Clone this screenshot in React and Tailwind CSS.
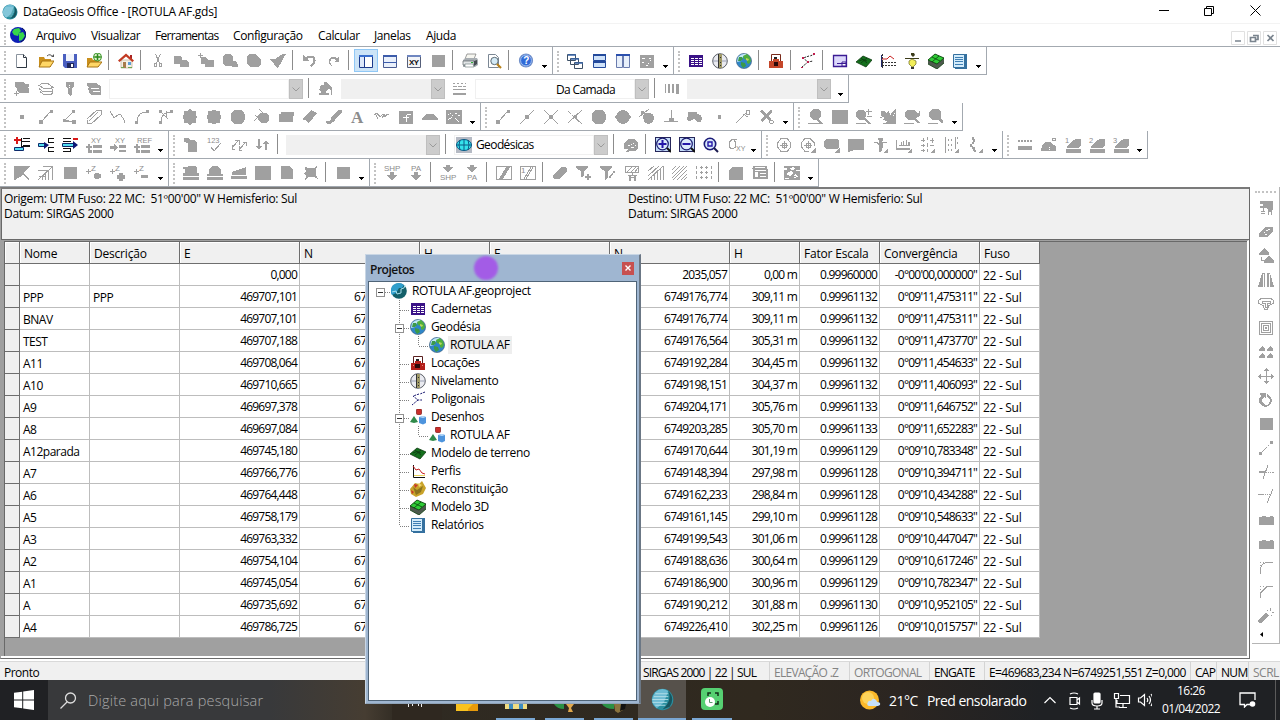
import { Fragment } from "react";

// Disabled toolbar glyphs on a 16x16 grid: f = filled path, s = stroked path, t = [x, y, size, text]
const glyphs = {
  cut: { s: "M5.5 1l4 9M10.5 1l-4 9M4.5 10.5h2v3h-2zM9.5 10.5h2v3h-2z" },
  copy: { f: "M0 3h6l2 2v2h4l3 3v4H6v-3H0z" },
  copyPlus: { f: "M3 4h5l2 3h6v7H7v-3H3zM0 2h5v1H0zM2 0h1v5H2z" },
  paste: { f: "M1 3l2-2h5l3 2v5h3l2 4v2h-6v-1H3l-2-2z" },
  pasteSpecial: { f: "M1 3l2-2h6l3 2 3 4v4l-3 3H5l-4-3z" },
  brush: { f: "M0 6h5l3-2 5-3h3l-3 5-2 4-3 5H7l-3-4z" },
  undo: { f: "M1 2v6h6L5 6q5-3 6 0t-3 7l2 1q5-5 3-9T3 4z" },
  redo: { f: "M13 4v5H8l2-2Q7 4 5 7t2 6H5Q1 8 4 5t7 0z" },
  square: { f: "M2 2h13v12H2z" },
  windowGray: { f: "M1 2h14v13H1z", w: "M3 5h3v1H3zM10 5h2v1h-2zM11 7h1v1h-1zM3 9h2v1H3zM9 10h1v1H9zM7 12h2v1H7z" },
  layersDown: { f: "M1 1h8l2 2h4v3l-2 1h2v5H6l-4-3 2-1-3-2zM0 12h5v1H0zM2 10h1v5H2z" },
  layers: { s: "M1 4.5l3-2h6l5 4-3 1H6zM1 7.5l4 3h9l1-2M2 10.500l4 3h7l2-2" },
  torch: { f: "M4 1h8v4l-2 3v5l-2 2-2-2V8L4 5z", w: "M7 4h1v1H7zM7 6h1v1H7z" },
  layers2: { f: "M1 2h9l5 3v9H6l-4-3 2-1-3-2 2-1-2-2z", w: "M5 7h8v1H5zM7 10h7v1H7z" },
  bucket: { f: "M3 4h3V1h3l5 6v7h-1V9l-3-1-2 2v2h3v2H1v-2l3-1-3-2z" },
  lineStyles: { f: "M1 2h2v1H1zM5 2h2v1H5zM9 2h2v1H9zM13 2h1v1h-1zM1 5h4v1H1zM6 5h4v1H6zM11 5h3v1h-3zM1 8h13v1H1zM1 12h13v2H1z" },
  lineWeights: { f: "M1 3h1v9H1zM4 3h2v9H4zM8 3h2v9H8zM12 3h3v10h-3z" },
  dot: { f: "M6 6h4v4H6z" },
  line: { f: "M12 1h3v3h-3zM1 11h4v4H1z", s: "M4 12l8-9" },
  angle: { f: "M10 1h3v3h-3zM1 10h3v3H1zM10 11h4v4h-4z", s: "M11 3L3 11l8 2M4 12.500h6" },
  parallel: { s: "M1 10L11 1M5 15L15 6M1 10.500v4h4M11 1.500h4v4M3 12l9-9" },
  polyline: { s: "M0 2l4 7 5-4 2 1 3 5 1 3" },
  arc: { f: "M12 1h3v3h-3zM1 12h3v3H1z", s: "M3 13Q3 3 13 3" },
  arcs: { f: "M1 1h3v3H1zM12 1h3v3h-3zM1 12h3v3H1z", s: "M3 13Q3 3 13 3M2 2l8 8M8 1.500v6" },
  octagon: { f: "M8 0l3 2h3v3l1 3-1 3v3h-3l-3 2-3-2H2v-3L1 8l1-3V2h3z" },
  octagon2: { f: "M6 1h4v1h4v4h1v4h-1v4h-4v1H6v-1H2v-4H1V6h1V2h4z" },
  circle: { f: "M5 1h6l3 2 1 3v4l-1 3-3 2H5l-3-2-1-3V6l1-3z" },
  tangent: { f: "M7 4h5l3 3v4l-3 3H7l-3-3V8l-4 4L6 4z", s: "M5 0l6 6M1 6l6 5" },
  rect: { f: "M3 3h13v3l-1 2v5H1V5h2z" },
  diamond: { f: "M1 9l8-8 6 3-7 9-2 1-2-3H1z" },
  slope: { f: "M0 12h4l2-5 7-6h3v3l-7 6v2l-5 3H1z" },
  letterA: { t: [1, 14, 17, "A"], serif: true },
  wave: { s: "M0 6l3-2 3 4 3-3 2 3 2-3 2 1M2 6l2 4M8 9l3-4" },
  imgF: { f: "M1 2h14v13H1z", w: "M9 5h4v1H9zM8 6h1v7H8zM5 8h6v1H5z" },
  dome: { f: "M0 10l4-5h7l5 5v1H0z" },
  imgHatch: { f: "M0 1h16v14H0z", w: "M2 5h1v1H2zM4 4h1v1H4zM6 6h1v1H6zM9 4h2v1H9zM12 6h2v1h-2zM2 10l4-2v1l-4 2zM9 8l4 5h-1L8 9z" },
  midpoint: { f: "M6 6h4v4H6z", s: "M1 15L15 1" },
  cross: { f: "M6 6h4v4H6z", s: "M1 1l14 14M1 15L15 1" },
  cross2: { f: "M7 6h3v3H7z", s: "M1 2l3 3M5 6l10 9M1 14L15 1" },
  roundDiamond: { f: "M8 1l4 1 2 3 2 3-2 3-2 3-4 1-4-1-2-3-2-3 2-3 2-3z" },
  tangentDot: { f: "M5 4h4l5 1 1 4-1 4-4 2-4-1-2-5zM2 2h3v3H2z", s: "M0 8L10 0" },
  perp: { f: "M6 9h5v4H6z", s: "M8.500 1v9M1 12.500h14" },
  blobs: { f: "M1 3h9v2l4 1 1 3-1 4h-4l-3-3-4 2H1l-1-2 1-3z" },
  dotSmall: { f: "M7 6h3v4H7z" },
  lineCircle: { s: "M1 14L12 3M8 5l5 3M11.500 1.500h3v4h-3z" },
  crossX: { f: "M1 2l2-1 4 4 4-4h2v2L9 7l3 3-1 2-4-3-4 4-2-2 4-4zM11 11h3v1h-3zM11 14h3v1h-3zM10 12h1v2h-1zM14 12h1v2h-1z" },
  zoomBlob: { f: "M5 0h5l3 3v5l-3 2 4 3v1h1v1H0v-1h11l-3-3H5L2 8V3z" },
  zoomPM: { f: "M2 1h5l3 3v3l-1 2 6 5v1h-3l-4-4H4L0 8V3zM12 0h1v2h3v1h-3v3h-1V3h-2V2h2zM11 7h5v1h-5zM0 14h10v1H0z" },
  pan: { f: "M1 2h3l2 2 3-2 1 3 6-5v15H3v-1l5-1-6-3 3-1-4-2zM0 8h2v1H0z", w: "M12 2h1v1h-1zM14 4h1v1h-1zM10 5h1v1h-1zM13 6h1v1h-1z" },
  zoomBack: { f: "M3 1h7l3 3h2l1-3v6l-3 1-1 2 4 4h-3l-3-3H4L1 8V4zM0 14h10v1H0z" },
  zoomPlain: { f: "M4 0h6l3 3v6l2 3v2h-2l-3-3H4L1 8V3zM0 14h10v1H0z" },
  xyPlus: { f: "M0 9h6v2H0zM2 7h2v6H2zM7 8h9v3H7zM2 13h4v3H2zM7 13h9v3H7z", t: [5, 6, 7.500, "XY"] },
  xyArrow: { f: "M0 9h4V7l4 3.500L4 14v-2H0zM9 8h7v3H9zM9 13h7v2H9z", t: [5, 6, 7.500, "XY"] },
  refPlus: { f: "M0 9h6v2H0zM2 7h2v6H2zM7 8h9v3H7zM2 13h4v3H2zM7 13h9v3H7z", t: [3, 6, 7.500, "REF"] },
  doc: { f: "M1 1h5l1 2h5l2 3v9H5V6L1 5z" },
  check123: { s: "M4 10l3 4 7-8", t: [0, 6, 7.500, "123"] },
  swapDiag: { s: "M1 11l6-7M4 3.500h4v4M8 13l6-7M12 5.500h3v3M1 8v4h3M8 9v4h3" },
  downUp: { f: "M3 2h2v7h2l-3 4-3-4h2zM11 3l3 4h-2v6h-2V7H8z" },
  dog: { f: "M5 2h6l4 4v6l-3 2H8l-5 1 2-3H1V7z", w: "M5 8h2v1H5zM8 7h1v1H8zM10 6h1v1h-1zM8 10h3v1H8zM12 8h1v1h-1z" },
  sigma: { s: "M10 2.500H5L2.500 5v5L4 11.500h2L8.500 10V5L7 3", t: [9, 14, 7, "XY"] },
  rose: { s: "M5 1.500h6l3.500 4v5l-3.500 4H5L1.500 10V6zM8 4v8M4 8h8M6 6h4v4H6z" },
  roseTri: { f: "M16 10v6h-6z", s: "M5 1.500h5l4 4v3M9 14.500H5L1.500 10V6L5 1M8 4v8M4 8h8M6 6h4v4H6z" },
  boxTri: { f: "M3 2h10l2 2v6l-2 2H3l-3-2V4zM16 10v6h-6z" },
  flag: { f: "M0 2h16v11H6l-3 1-3 1z" },
  survey: { f: "M6 1h5v2L9 5h6v1h-4v4l-2 5H7V9L5 6H0l4-1 3 1V4zM16 11v5h-5z" },
  chartTri: { f: "M0 3h1v10H0zM3 8h11v1H3zM5 5h1v3H5zM7 4h1v4H7zM10 3h1v5h-1zM12 5h2v3h-2zM1 11h13v2H1zM16 11v5h-5z" },
  gridTri: { s: "M1 3.500h4M1 8.500h4M1 13.500h4M10 3.500h4M10 8.500h4M3.500 1v4M3.500 7v3M3.500 12v3M7.500 0v3M7.500 6v4M7.500 12v3M12.500 1v5", f: "M15 11v5h-5z" },
  vertTri: { s: "M1.500 0v16M11.500 0v12M4.500 2v2M4.500 7v2M4.500 12v2M7.500 2v2M7.500 7v2M7.500 12v2", f: "M15 11v5h-5zM13 0h1v2h-1zM13 5h1v2h-1z" },
  squiggle: { f: "M4 0h2v2h1v3H6v2H4v2h1v1h2v3h1v2H6v-1H5v-2H4v-2H2V7h2V5h1V3H4zM15 11v5h-5z" },
  dotsBar: { f: "M1 3h2v2H1zM4 3h2v2H4zM7 3h2v2H7zM10 3h2v2h-2zM13 3h2v2h-2zM1 9h14v4H1z" },
  domeDeg: { f: "M0 13l1-4 3-4h5l4 3 2 2v4H0z", s: "M11.500 1.500h3v2h-3z", w: "M8 10h1v1H8zM8 12h1v1H8z" },
  leaf1: { f: "M2 10l4-5 5-3h5v6l-3 3H2zM1 12h15v4H1z", t: [0, 6, 7.500, "1"] },
  leaf2: { f: "M2 10l4-5 5-3h5v6l-3 3H2zM1 12h15v4H1z", t: [0, 6, 7.500, "2"] },
  leaf3: { f: "M2 10l4-5 5-3h5v6l-3 3H2zM1 12h15v4H1z", t: [0, 6, 7.500, "3"] },
  halfSquare: { f: "M0 1h16L10 8l5 6v1l-6-5-8 5H0z" },
  rays: { s: "M0 5.500h10M0 15L15 1M4.500 11v4M7.500 8v7M10.500 5v10M14.500 1v14M1 11.500h6M5 1.500h10" },
  zDot: { f: "M0 6h5v1H0zM2 4h1v5H2zM9 8h4v1h2v4h-2v1H9v-1H8V9h1z", t: [5, 6, 8, "Z"] },
  zCross: { f: "M0 6h5v1H0zM2 4h1v5H2zM9 8h4v2h2v4h-2v2H9v-2H7v-4h2z", t: [5, 6, 8, "Z"] },
  zMinus: { f: "M0 6h5v1H0zM2 4h1v5H2zM7 10h7v3H7z", t: [5, 6, 8, "Z"] },
  dome1: { f: "M3 2l3-1h5l3 1v6h2v3H0V8h2V4H0V2zM0 12h16v3H0z" },
  dome2: { f: "M5 1h5l4 4v4h2v2H0V9h2V5zM0 12h16v3H0z" },
  wedge: { f: "M1 7l14-5v8H1zM0 11h16v3H0z" },
  bigSquare: { f: "M0 1h16v14H0z" },
  docCorner: { f: "M2 1h8l4 4v9H2z" },
  bug: { f: "M2 2l3 1h6l3-2-1 4v5l2 4-4-2H6l-4 3 1-4-2-3 2-1z" },
  diagBox: { s: "M.5 1.500h15v13H.5z", f: "M3 14L10 2h4L7 14z" },
  halfBox: { s: "M.5 1.500h15v13H.5zM4 14L11 2M6 14l7-12", t: [1, 8, 8, "1"] },
  shpDown: { f: "M6 7h4v3h4l-6 5-6-5h4z", t: [0, 6, 8, "SHP"] },
  paDown: { f: "M6 7h4v3h4l-6 5-6-5h4z", t: [3, 6, 8, "PA"] },
  downShp: { f: "M6 0h4v2h4L8 7 2 2h4z", t: [0, 15, 8, "SHP"] },
  downPa: { f: "M6 0h4v2h4L8 7 2 2h4z", t: [3, 15, 8, "PA"] },
  eraser: { f: "M1 10l8-8h4l2 2v3l-8 7H3l-2-1z" },
  funnelPlus: { f: "M0 1h12v2L8 6v5l-3 1V6L0 3zM9 11h6v2H9zM11 9h2v6h-2z" },
  funnelSlash: { f: "M0 1h12v2L8 6v7l-3 2V6L0 3zM9 11h2v2H9zM13 6h2v2h-2z", s: "M9 13l6-7" },
  hatchBox: { s: "M1.500 1.500h13v6h-13zM3 7l5-5M7 7l5-5M11 7l3-4M8 8v3", f: "M4 10h9v1H4zM5 11h2v5H5zM10 11h2v5h-2zM7 12h3v1H7z" },
  hatchVert: { s: "M0 6l6-5M0 11L11 1M0 15L15 1M3 15v-4M6.500 15V9M9.500 15V6M12.500 15V4M15.500 15V1" },
  hatch: { s: "M0 5l4-4M0 9l8-8M0 13l12-12M1 15L15 1M5 15L15 5M9 15l6-6M12 15l3-3" },
  dots: { f: "M0 1h1v3H0zM0 6h1v3H0zM0 11h1v3H0zM5 1h1v3H5zM5 6h1v3H5zM5 11h1v3H5zM10 1h1v3h-1zM10 6h1v3h-1zM10 11h1v3h-1zM15 1h1v3h-1zM15 6h1v3h-1zM15 11h1v3h-1zM4 2h3v1H4zM4 7h3v1H4zM4 12h3v1H4zM9 2h3v1H9zM9 7h3v1H9zM9 12h3v1H9z" },
  roundSquare: { f: "M4 2h11v13H1V5z" },
  form: { f: "M1 1h14v3h1v10H1V4H0V3h1z", w: "M3 5h11v1H3zM3 7h3v5H3zM8 8h6v1H8zM8 11h6v1H8zM3 2h10v1H3z" },
  pattern: { f: "M0 1h16v14H0z", w: "M0 3h3v2H0zM5 4l4-2 2 2-3 1zM12 5h4v1h-4zM2 9l5-3 3 2-4 3zM11 9l3 2-1 1-3-1zM1 13h4v1H1zM8 13l4-1v1z" },
  // vertical bar
  copyObj: { f: "M2 1h13v9h-1v5h-1v-3h-2v3h-1V9L8 8H6v3h1v1H3v-1h2V8H2V6h3V4H2zM3 13h4v1H3z" },
  eraserSide: { f: "M1 9l6-6h8v4l-6 6H1z", w: "M8 6h2v1H8zM6 8h1v1H6zM10 5h2v1h-2zM7 10h2v1H7z" },
  rotateTree: { f: "M6 0l5 5v2H1V5zM11 7l5 6v2H6v-2zM3 9h1v4H3zM3 12h3v1H3z" },
  mirror: { f: "M4 1h3v14H0zM9 1h3l4 14H9z", w: "M5 2h1v13H5zM11 2h1v13h-1z" },
  offset: { s: "M3 2.500h10l2.500 2v3L11 9.500 9.500 13h-3L5 9.500.5 7.500v-3zM4 5h8v2H9v4H7V7H4z" },
  concentric: { s: "M1.500 1.500h13v13h-13zM3.500 3.500h9v9h-9zM5.500 5.500h5v5h-5z", f: "M7 7h2v2H7z" },
  array: { f: "M4 2l3 3v2H1V5zM12 2l3 3v2H9V5zM4 9l3 3v2H1v-2zM12 9l3 3v2H9v-2z" },
  move: { s: "M8.500 1v14M1 8.500h15", f: "M8 0h1l2 3H6zM8 16h1l2-3H6zM0 8v1l3 2V6zM16 8v1l-3 2V6z" },
  rotate: { f: "M2 1h6v6L6 5l-2 3 1 3 3 2 3-1 1-4-3-4V2l4 3 1 4-2 4-4 2-4-1-3-3V6l2-2z" },
  dashLine: { f: "M12 1h3v3h-3zM1 12h3v3H1zM4 11h1v1H4zM6 9h1v1H6zM8 7h1v1H8zM10 5h1v1h-1z", s: "M3 13l5-5" },
  trim: { s: "M5 15L10 1M1 8.500h8", f: "M10 8h1v1h-1zM12 8h1v1h-1zM14 8h2v1h-2zM1 7h6v1H1z" },
  extend: { s: "M9 15L15 1M0 6.500h6", f: "M7 6h1v1H7zM9 6h1v1H9zM11 6h1v1h-1z" },
  bridge: { f: "M1 5h2l1-1h3l1 1h3l1-1h2l1 1h1v8H1z" },
  fillet: { s: "M2.500 14V9Q3 3 9 2.500h6", f: "M2 2h1v1H2zM5 2h1v1H5zM2 5h1v1H2z" },
  chamfer: { s: "M2.500 14V9L9 2.500h6", f: "M2 2h1v1H2zM5 2h1v1H5zM2 5h1v1H2z" },
  wand: { f: "M0 12l8-7 3 3-8 7H1zM12 0h1v3h-1zM9 2h1v1H9zM14 4h2v1h-2zM13 7h1v1h-1z" },
};

const ballBody = (
  <>
    <circle cx="8" cy="8" r="7.500" fill="#2b8f9f" />
    <path d="M3 3q4-4 9-1l-3 8-5 4q-6-5-1-11z" fill="#6dbbd3" />
    <path d="M3 4h9M2 6h10M1 8h11M1 10h10M3 12h7" stroke="#b9e2ea" strokeWidth=".6" />
    <path d="M12 2q5 5 1 11l-5 2q7-6 4-13z" fill="#17555f" />
  </>
);

const colored = {
  ball: ballBody,
  geo: (
    <>
      <circle cx="8" cy="8" r="7.600" fill="#2f86c8" stroke="#3c5a78" strokeWidth=".6" />
      <path d="M2 4q4-4 9-3L7 4 5 8 1 9z" fill="#c3e8f5" />
      <path d="M7 3l4-2 3 3 1 4-2 3-2-1 0-3-3-1z" fill="#4fae3c" />
      <path d="M3 4l3 0 1 2-2 2-3 0zM5 9l4 1 1 3-3 2-2-3z" fill="#3c9a48" />
      <path d="M10 5l3 1-1 2-2-1z" fill="#b9d65c" />
    </>
  ),
  earth: (
    <>
      <circle cx="8" cy="8" r="8" fill="#0c1fb4" />
      <path d="M4 2l5-1 2 3-2 2-1 3-4-1-2-3zM9 6l4-1 2 4-3 4-3 1 0-5z" fill="#36d64a" />
      <path d="M12 1a8 8 0 0 1-1 14" stroke="#061058" fill="none" />
    </>
  ),
  newDoc: (
    <>
      <path d="M2.500 1.500h7l3 3v10h-10z" fill="#fff" stroke="#8b949e" />
      <path d="M9.500 1.500v3h3M12.500 5v9.500H3" fill="none" stroke="#2f3842" />
    </>
  ),
  open: (
    <>
      <path d="M1 4h5l1 2h6v8H1z" fill="#c98f1c" />
      <path d="M4 8h12l-4 6H1z" fill="#ffd766" stroke="#a87413" />
      <path d="M9 3q3-3 6 1" stroke="#555" fill="none" />
      <path d="M13 4h3V1z" fill="#555" />
    </>
  ),
  save: (
    <>
      <path d="M1 1h14v14H3l-2-2z" fill="#4a5fc0" />
      <path d="M4 1h8v7H4z" fill="#f1f4fb" />
      <path d="M5 10h7v5H5z" fill="#20285c" />
      <path d="M9 11h2v3H9z" fill="#fff" />
    </>
  ),
  addFolder: (
    <>
      <path d="M1 5h5l1 2h6v7H1z" fill="#c98f1c" />
      <path d="M4 9h12l-4 5H1z" fill="#ffd766" stroke="#a87413" />
      <circle cx="11.500" cy="4" r="4" fill="#e5f5d5" stroke="#3c962c" />
      <path d="M11 1h1v6h-1zM8.500 3.500h6v1h-6z" fill="#2f8b1e" stroke="#2f8b1e" strokeWidth=".6" />
    </>
  ),
  home: (
    <>
      <path d="M3 7h11v8H3z" fill="#f5f0e6" stroke="#b6a37f" strokeWidth=".6" />
      <path d="M12 2h2v4h-2z" fill="#a22" />
      <path d="M0 7.500L8 .5l8 7-1.500 1.500L8 3.500 1.500 9z" fill="#c23a22" />
      <path d="M5 9h3v6H5z" fill="#a87c4c" />
      <path d="M10 9h3v3h-3z" fill="#5d9ed6" />
      <path d="M3 14h3v1H3zM10 14h4v1h-4z" fill="#6aa84f" />
    </>
  ),
  viewTree: (
    <>
      <path d="M1.500 2.500h13v12h-13z" fill="#fff" stroke="#1c3a8c" />
      <path d="M1 2h14v2H1z" fill="#3a6fce" />
      <path d="M6 4h1v11H6z" fill="#1c3a8c" />
      <path d="M2 4h4v10H2z" fill="#dce8fa" />
    </>
  ),
  viewSplit: (
    <>
      <path d="M1.500 2.500h13v12h-13z" fill="#e9f0fb" stroke="#4a5c92" />
      <path d="M1 2h14v2H1zM1 9h14v1H1z" fill="#3c5cab" />
    </>
  ),
  viewXY: (
    <>
      <path d="M1.500 2.500h13v12h-13z" fill="#f2f4f8" stroke="#555f79" />
      <path d="M1 2h14v2H1z" fill="#6f86c0" />
      <text x="3" y="12" fontSize="8" fontWeight="bold" fill="#111" fontFamily="Liberation Sans" textLength="10">XY</text>
    </>
  ),
  print: (
    <>
      <path d="M5 1h9l-2 5H3z" fill="#f6f6f0" stroke="#777" strokeWidth=".7" />
      <path d="M1 7l3-2h11l1 2v5l-3 2H1z" fill="#a7adb2" />
      <path d="M1 8h11v4H1z" fill="#e2e5e7" stroke="#5d6468" strokeWidth=".7" />
      <path d="M12 8l3-1v4l-3 2z" fill="#444b50" />
      <path d="M9 9h2v1H9z" fill="#2fae36" />
      <path d="M3 11h8l1 3H3z" fill="#fff" stroke="#677" strokeWidth=".6" />
    </>
  ),
  preview: (
    <>
      <path d="M2.500 1.500h7l3 3v10h-10z" fill="#fff" stroke="#7b8794" />
      <circle cx="8.500" cy="8" r="3.700" fill="#d3eaf6" stroke="#5c6b75" />
      <path d="M11 11l4 4" stroke="#b98118" strokeWidth="2.200" />
    </>
  ),
  help: (
    <>
      <circle cx="8" cy="7.500" r="6.500" fill="#2f6ad8" stroke="#7290c8" strokeWidth="1.200" />
      <circle cx="8" cy="7.500" r="5.400" fill="none" stroke="#cfdff8" strokeWidth=".7" />
      <text x="5.200" y="11.300" fontSize="10" fontWeight="bold" fill="#fff" fontFamily="Liberation Sans">?</text>
    </>
  ),
  cascade: (
    <g fill="#fff" stroke="#3d5066">
      <path d="M.5 1.500h8v6h-8zM3.500 5.500h8v6h-8zM7.500 9.500h8v6h-8z" />
      <path d="M1 2h8M4 6h8M8 10h8" stroke="#3a66a8" strokeWidth="1.500" />
    </g>
  ),
  tileH: (
    <>
      <path d="M2.500 1.500h12v6h-12zM2.500 8.500h12v6h-12z" fill="#cfe2f9" stroke="#234a9c" />
      <path d="M2 1h13v2H2zM2 8h13v2H2z" fill="#234a9c" />
    </>
  ),
  tileV: (
    <>
      <path d="M1.500 1.500h6v13h-6zM8.500 1.500h6v13h-6z" fill="#e8f0fb" stroke="#6a7cae" />
      <path d="M1 1h14v2H1z" fill="#2b50ae" />
    </>
  ),
  notebook: (
    <g shapeRendering="crispEdges">
      <path d="M1 2h14v12H1z" fill="#3a1287" />
      <path d="M3 5h3v1H3zM7 5h3v1H7zM11 5h3v1h-3zM3 7h3v1H3zM7 7h3v1H7zM11 7h3v1h-3zM3 9h3v1H3zM7 9h3v1H7zM11 9h3v1h-3zM3 11h3v1H3zM7 11h3v1H7zM11 11h3v1h-3z" fill="#fff" />
    </g>
  ),
  level: (
    <>
      <circle cx="8" cy="8" r="7.300" fill="#e9eaf0" stroke="#5c6068" />
      <path d="M1 8h14" stroke="#9aa0b4" />
      <path d="M7 1h3v14H7z" fill="#a09a68" />
      <path d="M6 1h1v14H6zM8 4h1v1H8zM8 9h1v1H8zM8 12h1v1H8z" fill="#333" />
    </>
  ),
  station: (
    <>
      <path d="M3.500 9V1.500h9V9" fill="#fff" stroke="#5a2020" />
      <path d="M6 4h3v3H6z" fill="#222" />
      <path d="M1 8h4V6h6v2h4v7H1z" fill="#b3201b" />
      <path d="M5 9h5v4H5z" fill="#2a0a0a" />
      <path d="M3 10h1v1H3zM12 10h1v1h-1z" fill="#e9857a" />
    </>
  ),
  stationOrange: (
    <>
      <path d="M3.500 9V1.500h9V9" fill="#fff" stroke="#7a2a1a" />
      <path d="M6 4h3v3H6z" fill="#222" />
      <path d="M1 8h4V6h6v2h4v7H1z" fill="#c5472a" />
      <path d="M6 9h4v4H6z" fill="#2a0a0a" />
    </>
  ),
  traverse: (
    <>
      <path d="M15 1l-5 2M9 3L3 5l5 4 5-1M8 9l-6 5" stroke="#222" fill="none" strokeDasharray="2 1" />
      <path d="M2 4h2v2H2zM7 8h2v2H7zM13 0h2v2h-2zM1 14h2v1H1z" fill="#c01c4c" />
    </>
  ),
  traverseBlue: (
    <path d="M15 1l-5 2M9 3L3 5l5 4h4M8 9l-6 5" stroke="#15156e" fill="none" strokeDasharray="2 1" />
  ),
  sheet: (
    <>
      <path d="M1.500 2.500h13v11h-13z" fill="#dcd8fb" stroke="#3b1b94" strokeWidth="1.300" />
      <path d="M5 10.500h9M10 9h4v4h-4z" fill="#fff" stroke="#3b1b94" />
    </>
  ),
  terrain: (
    <>
      <path d="M0 9l7-6 9 4-6 7z" fill="#14701c" stroke="#0d3a10" strokeWidth=".8" />
      <path d="M5 5l6 5M3 8q4-3 8 0M11 5l-6 5" stroke="#0d3a10" fill="none" strokeWidth=".8" />
    </>
  ),
  profile: (
    <>
      <path d="M2.500 1v14M2 9.500h14M2 12.500h14" stroke="#333" strokeDasharray="2 1" />
      <path d="M1 6h6l3-3 4 3" stroke="#c82323" fill="none" />
      <path d="M1.500 2v12" stroke="#222a6b" />
    </>
  ),
  profileTree: (
    <>
      <path d="M3.500 2v12.500H15" stroke="#111" fill="none" />
      <path d="M3 3l3 4 3-1 3 4 3 1" stroke="#c82323" fill="none" />
      <path d="M4 12h11v1H4z" fill="#e8d25c" />
    </>
  ),
  lamp: (
    <>
      <path d="M7 0h3l1 2-2 2-2-2zM1 5h14v1H1z" fill="#3b3b1a" />
      <path d="M8 6l4 2v3l-3 3H8l-3-3V8z" fill="#f1ee5a" stroke="#6d6a1f" strokeWidth=".7" />
      <path d="M7 14h3v2H7z" fill="#333" />
    </>
  ),
  model3d: (
    <>
      <path d="M0 7l7-6 9 4v5l-7 6-9-5z" fill="#4d5a4d" />
      <path d="M0 7l7-6 9 4-7 6z" fill="#2ecc36" stroke="#0b3d0d" strokeWidth=".8" />
      <path d="M4 4l8 4M11 3L4 9M0 11l9 5 7-6" stroke="#0b3d0d" fill="none" strokeWidth=".8" />
    </>
  ),
  report: (
    <>
      <path d="M3 1h12v15H3z" fill="#34709f" />
      <path d="M1.500 1.500h11v13h-11z" fill="#d3ecfb" stroke="#34709f" />
      <path d="M3 4.500h8M3 6.500h8M3 8.500h8M3 11.500h8" stroke="#3f7fb4" />
    </>
  ),
  rowAdd: (
    <>
      <path d="M2 0h2v2h3v2H4v3H2V4H0V2h2z" fill="#d81818" />
      <path d="M9 1h7v1H9zM7 4h9v1H7zM9 8h7v1H9zM7 1h1v8h8v1H7z" fill="#111" />
      <path d="M.5 10.500h9v3h-9z" fill="#52dff2" stroke="#0d2a6b" />
    </>
  ),
  rowInsert: (
    <>
      <path d="M.5 6.500h6v3h-6z" fill="#52dff2" stroke="#0d2a6b" />
      <path d="M6 5l5 3-5 4V9h1V7H6z" fill="#0b1775" />
      <path d="M10 1h6v1h-5v3h5v1h-6zM10 10h6v1h-5v3h5v1h-6z" fill="#111" />
    </>
  ),
  rowRemove: (
    <>
      <path d="M11 1h5v2h-5z" fill="#d81818" />
      <path d="M1 1h8v1H1zM1 4h8v1H1zM1 11h8v1H1zM1 14h8v1H1zM8 11h1v3H8z" fill="#111" />
      <path d="M.5 6.500h11v3H.5z" fill="#52dff2" stroke="#0d2a6b" />
      <path d="M11 4l5 4-5 4z" fill="#0b1775" />
    </>
  ),
  zoomIn: (
    <>
      <path d="M0 0h16v15H0z" fill="#26265a" />
      <path d="M1 1h14v13H1z" fill="#c3dbf9" />
      <circle cx="7.500" cy="7" r="5.800" fill="#dbe9fb" stroke="#191970" strokeWidth="1.200" />
      <path d="M6.500 3h2v3h3v2h-3v3h-2V8h-3V6h3z" fill="#2416a8" />
      <path d="M12 11l4 4" stroke="#111" strokeWidth="2" />
    </>
  ),
  zoomOut: (
    <>
      <path d="M0 0h16v15H0z" fill="#26265a" />
      <path d="M1 1h14v13H1z" fill="#c3dbf9" />
      <circle cx="7.500" cy="7" r="5.800" fill="#dbe9fb" stroke="#191970" strokeWidth="1.200" />
      <path d="M3.500 6h8v2h-8z" fill="#2416a8" />
      <path d="M12 11l4 4" stroke="#111" strokeWidth="2" />
    </>
  ),
  zoomWin: (
    <>
      <circle cx="7" cy="7" r="5.700" fill="#d8e8fa" stroke="#1b1b78" strokeWidth="1.600" />
      <path d="M5 5h4v4H5z" fill="none" stroke="#2416a8" strokeWidth="1.400" />
      <path d="M11 11l4 4" stroke="#1b1b50" strokeWidth="2" />
    </>
  ),
  drawings: (
    <>
      <rect x="6.500" y="0" width="5" height="5.500" rx="1" fill="#c9302c" stroke="#7c1613" strokeWidth=".7" />
      <path d="M0 13l4-6 4 6-4 1z" fill="#2f8a4a" />
      <path d="M9 8l4-1 3 1v6l-3 1.500L9 14z" fill="#4d94dd" />
      <path d="M9 8l4 1 3-1-3-1z" fill="#b8dbfb" />
    </>
  ),
  rebuild: (
    <>
      <path d="M0 8l5-6 4 1 3-3 4 7-3 6-7 3-5-3z" fill="#c9a32a" />
      <path d="M3 6l4 3 6-4-2 6-5 3z" fill="#8b741e" />
      <path d="M4 3l4 1-3 3zM1 9l3 2-2 2z" fill="#c7352a" />
      <path d="M8 2l4 2-3 2z" fill="#f2d96d" />
    </>
  ),
  project: (
    <>
      <circle cx="8" cy="8" r="7.800" fill="#14606a" />
      <path d="M2 2q6-4 11 0l-2 3-3 0-3 5-4 2q-3-5 1-10z" fill="#2f9ecb" />
      <path d="M1 9l4-1 1 3 4-1 0-4 3-1 1-3" stroke="#a8e0ee" fill="none" />
    </>
  ),
};

function Icon({ name }) {
  const body = colored[name];
  if (body) {
    return (
      <svg viewBox="0 0 16 16" className="h-4 w-4 shrink-0">
        {body}
      </svg>
    );
  }
  const g = glyphs[name];
  return (
    <svg viewBox="0 0 16 16" className="h-4 w-4 shrink-0 overflow-visible">
      <g shapeRendering="crispEdges">
        {g.f && <path d={g.f} fill="#a0a0a0" />}
        {g.s && <path d={g.s} fill="none" stroke="#a0a0a0" />}
        {g.w && <path d={g.w} fill="#fff" />}
      </g>
      {g.t && (
        <text
          x={g.t[0]}
          y={g.t[1]}
          fontSize={g.t[2]}
          fill="#8c8c8c"
          fontWeight={g.serif ? "bold" : "normal"}
          fontFamily={g.serif ? "Liberation Serif" : "Liberation Sans"}
        >
          {g.t[3]}
        </text>
      )}
    </svg>
  );
}

function Btn({ name, active }) {
  return (
    <div
      className={
        active
          ? "-mt-[4px] flex h-[23px] w-6 justify-center border border-[#90c8f6] bg-[#cce4f7] pt-[3px]"
          : "flex w-6 justify-center"
      }
    >
      <Icon name={name} />
    </div>
  );
}

function Sep() {
  return <div className="-mt-[3px] ml-[2px] mr-[5px] h-[20px] w-px bg-[#8c8c8c]" />;
}

function Combo({ width, gray, children }) {
  return (
    <div className="-mt-[2px] flex h-[20px] px-[3px]" style={{ width }}>
      <div className={`flex flex-1 items-center border border-[#f0f0f0] ${gray ? "bg-[#f0f0f0]" : "bg-white"}`}>
        {children}
      </div>
      <div className="flex w-[14px] items-center justify-center border border-[#bfbfbf] bg-[#cccccc]">
        <svg viewBox="0 0 8 5" className="h-[5px] w-2">
          <path d="M.5.5L4 4 7.500.5" fill="none" stroke="#9a9a9a" />
        </svg>
      </div>
    </div>
  );
}

// "|" is a separator, a "*" prefix marks the pressed button, objects are combo boxes
function Bar({ items }) {
  return (
    <div className="flex h-7 border-b border-r border-[#a3a9b0] pt-[6px]">
      <div className="flex w-[10px] justify-center pt-[1px]">
        <div className="-mt-[3px] h-[21px] border-l-2 border-dotted border-[#c3c3c3]" />
      </div>
      {items.map((item, i) => (
        <Fragment key={i}>
          {item === "|" ? (
            <Sep />
          ) : typeof item === "object" ? (
            <Combo width={item.w} gray={item.gray}>
              {item.content}
            </Combo>
          ) : (
            <Btn name={item.replace("*", "")} active={item.startsWith("*")} />
          )}
        </Fragment>
      ))}
      <div className="flex w-[14px] justify-center pr-[2px] pt-[12px]">
        <svg viewBox="0 0 5 3" className="h-[3px] w-[5px]" shapeRendering="crispEdges">
          <path d="M0 0h5v1H4v1H3v1H2V2H1V1H0z" fill="#000" />
        </svg>
      </div>
    </div>
  );
}

const daCamada = <span className="ml-auto mr-[19px] pt-[2px] text-[12px] tracking-[-0.6px]">Da Camada</span>;

const geodesicas = (
  <span className="flex items-center">
    <span className="ml-px flex h-4 w-4 items-center bg-[#b5bac4]">
      <svg viewBox="0 0 16 12" className="h-3 w-4">
        <ellipse cx="8" cy="6" rx="7.500" ry="5.500" fill="#35e3ec" stroke="#0c5a86" />
        <path d="M0 6h16M8 0v12M4 1q-2 5 0 10M12 1q2 5 0 10" stroke="#0c5a86" fill="none" />
      </svg>
    </span>
    <span className="ml-[4px] text-[12px] tracking-[-0.6px]">Geodésicas</span>
  </span>
);

const toolbarRows = [
  [
    ["newDoc", "open", "save", "addFolder", "|", "home", "|", "cut", "copy", "copyPlus", "paste", "pasteSpecial", "brush", "|", "undo", "redo", "|", "*viewTree", "viewSplit", "viewXY", "square", "|", "print", "preview", "|", "help"],
    ["cascade", "tileH", "tileV", "windowGray"],
    ["notebook", "level", "geo", "|", "stationOrange", "|", "traverse", "|", "sheet", "terrain", "profile", "lamp", "model3d", "report"],
  ],
  [
    ["layersDown", "layers", "torch", "layers2", { w: 200 }, "|", "bucket", { w: 110, gray: true }, "lineStyles", { w: 180, content: daCamada }, "|", "lineWeights", { w: 150, gray: true }],
  ],
  [
    ["dot", "line", "angle", "parallel", "polyline", "arc", "arcs", "octagon", "octagon2", "circle", "tangent", "rect", "diamond", "slope", "letterA", "wave", "imgF", "dome", "imgHatch"],
    ["line", "midpoint", "cross", "cross2", "circle", "roundDiamond", "tangentDot", "perp", "blobs", "dotSmall", "lineCircle", "crossX"],
    ["zoomBlob", "bigSquare", "zoomPM", "pan", "zoomBack", "zoomPlain"],
  ],
  [
    ["rowAdd", "rowInsert", "rowRemove", "xyPlus", "xyArrow", "refPlus"],
    ["doc", "check123", "swapDiag", "downUp", "|", { w: 160, gray: true }, "|", { w: 160, content: geodesicas }, "|", "dog", "|", "zoomIn", "zoomOut", "zoomWin", "sigma"],
    ["rose", "roseTri", "boxTri", "flag", "survey", "chartTri", "gridTri", "vertTri", "squiggle"],
    ["dotsBar", "domeDeg", "leaf1", "leaf2", "leaf3"],
  ],
  [
    ["halfSquare", "rays", "square", "zDot", "zCross", "zMinus"],
    ["dome1", "dome2", "wedge", "bigSquare", "docCorner", "bug", "|", "square"],
    ["shpDown", "paDown", "|", "downShp", "downPa", "|", "diagBox", "halfBox", "|", "eraser", "funnelPlus", "funnelSlash", "hatchBox", "hatchVert", "hatch", "dots", "|", "roundSquare", "form", "|", "pattern"],
  ],
];

const sideIcons = ["copyObj", "eraserSide", "rotateTree", "mirror", "offset", "concentric", "array", "move", "rotate", "square", "dashLine", "trim", "extend", "bridge", "bridge", "fillet", "chamfer", "wand"];

const menus = [
  ["Arquivo", "w-[55px] tracking-[-0.5px]"],
  ["Visualizar", "w-16 tracking-[-0.4px]"],
  ["Ferramentas", "w-[78px] tracking-[-0.7px]"],
  ["Configuração", "w-[85px] tracking-[-0.4px]"],
  ["Calcular", "w-14 tracking-[-0.4px]"],
  ["Janelas", "w-[52px] tracking-[-0.4px]"],
  ["Ajuda", "w-10 tracking-[-0.4px]"],
];

// name, description, E, N, H, scale factor, convergence
const rows = [
  ["", "", "0,000", "2035,057", "0,00 m", "0.99960000", "-0°00'00,000000\""],
  ["PPP", "PPP", "469707,101", "6749176,774", "309,11 m", "0.99961132", "0°09'11,475311\""],
  ["BNAV", "", "469707,101", "6749176,774", "309,11 m", "0.99961132", "0°09'11,475311\""],
  ["TEST", "", "469707,188", "6749176,564", "305,31 m", "0.99961132", "0°09'11,473770\""],
  ["A11", "", "469708,064", "6749192,284", "304,45 m", "0.99961132", "0°09'11,454633\""],
  ["A10", "", "469710,665", "6749198,151", "304,37 m", "0.99961132", "0°09'11,406093\""],
  ["A9", "", "469697,378", "6749204,171", "305,76 m", "0.99961133", "0°09'11,646752\""],
  ["A8", "", "469697,084", "6749203,285", "305,70 m", "0.99961133", "0°09'11,652283\""],
  ["A12parada", "", "469745,180", "6749170,644", "301,19 m", "0.99961129", "0°09'10,783348\""],
  ["A7", "", "469766,776", "6749148,394", "297,98 m", "0.99961128", "0°09'10,394711\""],
  ["A6", "", "469764,448", "6749162,233", "298,84 m", "0.99961128", "0°09'10,434288\""],
  ["A5", "", "469758,179", "6749161,145", "299,10 m", "0.99961128", "0°09'10,548633\""],
  ["A3", "", "469763,332", "6749199,543", "301,06 m", "0.99961128", "0°09'10,447047\""],
  ["A2", "", "469754,104", "6749188,636", "300,64 m", "0.99961129", "0°09'10,617246\""],
  ["A1", "", "469745,054", "6749186,900", "300,96 m", "0.99961129", "0°09'10,782347\""],
  ["A", "", "469735,692", "6749190,212", "301,88 m", "0.99961130", "0°09'10,952105\""],
  ["A4", "", "469786,725", "6749226,410", "302,25 m", "0.99961126", "0°09'10,015757\""],
];

const headers = ["", "Nome", "Descrição", "E", "N", "H", "E", "N", "H", "Fator Escala", "Convergência", "Fuso"];

function GridRow({ row }) {
  const [name, desc, e, n, h, scale, conv] = row;
  // the H and E columns in the middle lie wholly behind the Projetos window
  const cells = [e, name && n, "", "", n, h, scale, conv];
  return (
    <>
      <div className="border-b border-r border-[#6e6e6e] bg-[#f0f0f0]" />
      <div className="border-b border-r border-[#bdbdbd] pl-[3px] pt-[3px]">{name}</div>
      <div className="border-b border-r border-[#bdbdbd] pl-[3px] pt-[3px]">{desc}</div>
      {cells.map((c, i) => (
        <div key={i} className="border-b border-r border-[#bdbdbd] pr-[2px] pt-[2px] text-right tracking-[-0.8px]">
          {c}
        </div>
      ))}
      <div className="border-b border-r border-[#bdbdbd] pl-[3px] pt-[3px] tracking-[-0.3px]">22 - Sul</div>
    </>
  );
}

function DataGrid() {
  return (
    <div className="h-[415px] border-l border-t border-[#696969] bg-[#a0a0a0]">
      <div className="grid w-[1035px] auto-rows-[22px] grid-cols-[15px_70px_90px_120px_120px_70px_120px_120px_70px_80px_100px_60px] bg-white text-[12px] leading-[18px] tracking-[-0.5px]">
        {headers.map((h, i) => (
          <div
            key={i}
            className="border-b border-r border-[#6e6e6e] bg-[#f0f0f0] pl-1 pt-[3px] tracking-[-0.2px] shadow-[inset_1px_1px_0_#fff]"
          >
            {h}
          </div>
        ))}
        {rows.map((row, i) => (
          <GridRow key={i} row={row} />
        ))}
      </div>
    </div>
  );
}

const tree = [
  { label: "ROTULA AF.geoproject", icon: "project", depth: 0, box: true },
  { label: "Cadernetas", icon: "notebook", depth: 1 },
  { label: "Geodésia", icon: "geo", depth: 1, box: true },
  { label: "ROTULA AF", icon: "geo", depth: 2, selected: true },
  { label: "Locações", icon: "station", depth: 1 },
  { label: "Nivelamento", icon: "level", depth: 1 },
  { label: "Poligonais", icon: "traverseBlue", depth: 1 },
  { label: "Desenhos", icon: "drawings", depth: 1, box: true },
  { label: "ROTULA AF", icon: "drawings", depth: 2 },
  { label: "Modelo de terreno", icon: "terrain", depth: 1 },
  { label: "Perfis", icon: "profileTree", depth: 1 },
  { label: "Reconstituição", icon: "rebuild", depth: 1 },
  { label: "Modelo 3D", icon: "model3d", depth: 1 },
  { label: "Relatórios", icon: "report", depth: 1, last: true },
];

// Dotted connector in front of a node, with the collapse box where it has children
function Guide({ node }) {
  return (
    <svg viewBox="0 0 19 18" className="h-[18px] w-[19px] shrink-0" shapeRendering="crispEdges">
      {node.depth > 0 && (
        <path
          d={node.last || node.depth === 2 ? "M9.500 0v10" : "M9.500 0v18"}
          stroke="#808080"
          strokeDasharray="1 1"
          fill="none"
        />
      )}
      <path d="M10 10.500h9" stroke="#808080" strokeDasharray="1 1" />
      {node.box && (
        <>
          <rect x="5.500" y="6.500" width="8" height="8" fill="#fff" stroke="#919191" />
          <path d="M7 10.500h5" stroke="#333" />
        </>
      )}
    </svg>
  );
}

function ParentGuide() {
  return (
    <svg viewBox="0 0 19 18" className="h-[18px] w-[19px] shrink-0" shapeRendering="crispEdges">
      <path d="M9.500 0v18" stroke="#808080" strokeDasharray="1 1" />
    </svg>
  );
}

function ProjectWindow() {
  return (
    <div className="absolute left-[365px] top-[254px] flex h-[450px] w-[276px] flex-col border border-r-2 border-b-[#8fa3b8] border-l-[#c9d6e4] border-r-[#6b7785] border-t-[#c9d6e4] bg-[#9fb6d1] px-[2px] pb-[2px]">
      <div className="flex h-[26px] shrink-0 items-center justify-between pl-[2px] pr-[3px]">
        <span className="pt-[3px] text-[12px] font-semibold tracking-[-0.5px] text-[#111]">Projetos</span>
        <span className="flex h-[13px] w-[12px] items-center justify-center bg-[#c75050]">
          <svg viewBox="0 0 6 6" className="h-[6px] w-[6px]">
            <path d="M.5.5l5 5M5.500.5l-5 5" stroke="#fff" strokeWidth="1.400" />
          </svg>
        </span>
      </div>
      <div className="flex-1 border border-[#4f6478] bg-white">
        {tree.map((node, i) => (
          <div key={i} className="flex h-[18px] items-center pl-[2px]">
            {node.depth > 0 && <span className="w-[19px]" />}
            {node.depth === 2 && <ParentGuide />}
            <Guide node={node} />
            <span className="ml-px flex">
              <Icon name={node.icon} />
            </span>
            <span
              className={`ml-[3px] h-[18px] whitespace-nowrap px-[2px] text-[12px] leading-[18px] tracking-[-0.35px] ${node.selected ? "bg-[#eeeeee]" : ""}`}
            >
              {node.label}
            </span>
          </div>
        ))}
      </div>
      <div className="absolute left-[108px] top-[1px] h-6 w-6 rounded-full bg-[#a35ce6] blur-[1px]" />
    </div>
  );
}

const status = [
  ["SIRGAS 2000 | 22 | SUL", "w-[130px] tracking-[-0.85px]"],
  ["ELEVAÇÃO .Z", "w-[80px] tracking-[-0.7px] text-[#838383]"],
  ["ORTOGONAL", "w-[80px] tracking-[-0.7px] text-[#838383]"],
  ["ENGATE", "w-[55px] tracking-[-0.8px]"],
  ["E=469683,234 N=6749251,551 Z=0,000", "w-[206px] tracking-[-0.58px]"],
  ["CAP", "w-[26px] tracking-[-0.7px]"],
  ["NUM", "w-[32px] tracking-[-0.7px]"],
  ["SCRL", "w-[32px] tracking-[-0.5px] text-[#838383]"],
];

function StatusBar() {
  return (
    <div className="flex h-[19px] items-center justify-between border-t border-[#d9d9d9] bg-[#f0f0f0] text-[12px] leading-4">
      <span className="pl-1 pt-[3px] tracking-[-0.5px]">Pronto</span>
      <div className="flex">
        {status.map(([text, style], i) => (
          <span key={text} className={`${style} ${i ? "border-l border-[#d4d4d4]" : ""} whitespace-nowrap pl-[4px] pt-[3px]`}>
            {text}
          </span>
        ))}
      </div>
    </div>
  );
}

function Taskbar() {
  return (
    <div className="flex h-10 bg-[linear-gradient(90deg,#38393b_0,#38393b_270px,#463d32_365px,#2f2a22_400px,#30291f_760px,#2b2521_900px,#1f2124_1040px)] text-white">
      <div className="flex w-12 items-center justify-center bg-[#202124]">
        <svg viewBox="0 0 20 20" className="h-5 w-5" fill="#fff">
          <path d="M0 2.800l8.200-1.100v7.800H0zM9.200 1.500L20 0v9.500H9.200zM0 10.500h8.200v7.800L0 17.200zM9.200 10.500H20V20L9.200 18.500z" />
        </svg>
      </div>
      <div className="flex w-[344px] items-center pl-3">
        <svg viewBox="0 0 17 17" className="h-[17px] w-[17px]" fill="none" stroke="#ddd" strokeWidth="1.300">
          <circle cx="10.500" cy="6" r="5" />
          <path d="M7 10L.5 16.500" />
        </svg>
        <span className="ml-[11px] pt-px text-[14.500px] font-light tracking-[0.2px] text-[#a9a9a9]">Digite aqui para pesquisar</span>
      </div>
      <div className="flex w-[50px] items-end bg-[#2f2820]">
        <svg viewBox="0 0 50 16" className="h-4 w-[50px]" fill="#eee">
          <path d="M16 0h1v3h-1zM20 0h1v2h-1zM26 0h1v2h-1zM29 0h1v3h-1z" />
        </svg>
      </div>
      <div className="flex w-[49px] items-end justify-center">
        <svg viewBox="0 0 22 16" className="h-4 w-[22px]">
          <path d="M0 0h22v7H0z" fill="#f9c21f" />
          <path d="M12 5l5-5h5v7H12z" fill="#e79a0c" />
        </svg>
      </div>
      <div className="mx-[5px] flex w-[39px] items-end justify-center border-b-2 border-[#7aa7d3]">
        <svg viewBox="0 0 22 14" className="h-[14px] w-[22px]">
          <path d="M0 0h22v5H0z" fill="#f0dc82" />
          <path d="M4 0h4v5H4zM14 0h4v5h-4z" fill="#3d8cc0" />
        </svg>
      </div>
      <div className="mx-[5px] flex w-[39px] items-end justify-center border-b-2 border-[#7aa7d3]">
        <svg viewBox="0 0 22 14" className="h-[14px] w-[22px]">
          <path d="M0 0h10v5Q3 5 0 0z" fill="#2a9145" />
          <path d="M12 0h8l-3 4 2 4h-5l1-4z" fill="#e0a84c" />
        </svg>
      </div>
      <div className="mx-[5px] flex w-[39px] items-end justify-center border-b-2 border-[#7aa7d3]">
        <svg viewBox="0 0 24 14" className="h-[14px] w-6">
          <path d="M0 0h12v5Q3 5 0 0z" fill="#2a9145" />
          <path d="M12 0h9v6l-5 3-3-2z" fill="#8a743f" />
          <path d="M19 0h5l-1 5-5 2z" fill="#111" />
        </svg>
      </div>
      <div className="flex w-12 items-center justify-center border-b-2 border-[#7aa7d3] bg-[#56514b]">
        <svg viewBox="0 0 16 16" className="h-[23px] w-[23px]">{ballBody}</svg>
      </div>
      <div className="mx-[6px] flex w-[40px] items-center justify-center border-b-2 border-[#7aa7d3]">
        <svg viewBox="0 0 22 22" className="h-[22px] w-[22px]">
          <rect width="22" height="22" rx="4" fill="#56d072" />
          <path d="M7 8V5h3M14 5h3v3M17 13v3h-3" fill="none" stroke="#12301a" strokeWidth="1.500" />
          <circle cx="9" cy="14" r="5" fill="#fff" />
          <path d="M8.500 11v3.500h3" stroke="#5a9c6a" fill="none" />
        </svg>
      </div>
      <div className="ml-auto flex items-center">
        <svg viewBox="0 0 22 20" className="h-5 w-[22px]">
          <circle cx="9.500" cy="10" r="9.500" fill="#fbb829" />
          <circle cx="8" cy="8" r="6" fill="#fdd35b" />
          <path d="M9 16q-3-1-1-4 1-2 3-1 2-4 5-1 1 1 1 2 4 0 3 3l-2 1z" fill="#c6e0f8" />
        </svg>
        <span className="ml-[7px] w-[38px] text-[14px] tracking-[-0.5px]">21°C</span>
        <span className="w-[117px] whitespace-nowrap text-[14px] tracking-[-0.55px]">Pred ensolarado</span>
        <svg viewBox="0 0 108 20" className="h-5 w-[108px]" fill="none" stroke="#fff" strokeWidth="1.200">
          <path d="M.5 13l5.500-5.500L11.500 13" />
          <path d="M26 7.500h7v7h-7zM33 10l2.500-2v6L33 12M26 4q4-2 8 0M26 18q4 2 8 0" />
          <path d="M51 3h4q1 0 1 1v8q0 1-1 1h-4q-1 0-1-1V4q0-1 1-1z" fill="#fff" />
          <path d="M48 10v3q0 3 5 3t5-3v-3M53 16v3M50 19h6" />
          <path d="M76 5.500h9.500v8H73V10M79 14v3M75 17.500h8M70.500 3.500h4v5h-4zM72 9v8h4" />
          <path d="M94.500 8h2l4-3.500v11l-4-3.500h-2zM103 8q1.500 2 0 4M105 6q3 4 0 8M107 4q4 6 0 12" />
        </svg>
        <div className="ml-[8px] flex w-[62px] flex-col items-center text-[12px] leading-[18px] tracking-[-0.55px]">
          <span>16:26</span>
          <span>01/04/2022</span>
        </div>
        <svg viewBox="0 0 18 16" className="ml-[17px] mr-[10px] h-4 w-[18px]" fill="none" stroke="#fff" strokeWidth="1.300">
          <path d="M11 12.500H8L5.500 15v-2.500H1V1h15v7" />
          <circle cx="13.500" cy="12" r="2.800" fill="#fff" stroke="none" />
        </svg>
        <div className="ml-2 mr-1 h-10 w-px bg-[#5b5b5b]" />
      </div>
    </div>
  );
}

export default function App() {
  return (
    <div className="relative flex h-[720px] w-[1280px] flex-col overflow-hidden bg-white font-['Open_Sans','Noto_Sans',sans-serif] text-black">
      <div className="flex h-[23px] shrink-0 items-center pl-[2px]">
        <Icon name="ball" />
        <span className="ml-[5px] text-[12px] tracking-[-0.25px]">DataGeosis Office - [ROTULA AF.gds]</span>
        <svg viewBox="0 0 102 12" className="mb-[4px] ml-auto mr-[19px] h-3 w-[102px]" fill="none" stroke="#000">
          <path d="M0 6.500h10" />
          <path d="M45.500 4.500h7v7h-7zM47.500 4V2.500h7v7H53" />
          <path d="M91.500 1.500l10 10M101.500 1.500l-10 10" />
        </svg>
      </div>
      <div className="flex h-6 shrink-0 items-center border-b border-t border-b-[#a3a9b0] border-t-[#f3f3f3]">
        <div className="ml-1 h-[20px] border-l-2 border-dotted border-[#c3c3c3]" />
        <div className="ml-1 mr-[10px] flex w-4">
          <Icon name="earth" />
        </div>
        {menus.map(([label, style]) => (
          <span key={label} className={`${style} pt-px text-[12px]`}>
            {label}
          </span>
        ))}
        <svg viewBox="0 0 47 14" className="ml-auto mr-[2px] mt-[6px] h-[14px] w-[47px]" fill="none">
          <path d="M.5.5h13v13H.5zM16.500.5h13v13h-13zM32.500.5h13v13h-13z" stroke="#e1e1e1" />
          <path d="M4 10h6M19.500 6.500h5v4h-5zM22 4.500h5v4h-2M36.500 4l6 6M42.500 4l-6 6" stroke="#7a848e" strokeWidth="1.700" />
        </svg>
      </div>
      {toolbarRows.map((bars, i) => (
        <div key={i} className="flex h-7 shrink-0">
          {bars.map((items, j) => (
            <Bar key={j} items={items} />
          ))}
        </div>
      ))}
      <div className="flex h-[474px] shrink-0">
        <div className="h-[472px] w-[1250px] border border-t-2 border-[#696969] border-l-[#a0a0a0] border-t-[#7a7a7a] bg-[#f0f0f0]">
          <div className="flex h-[51px] border-b border-l border-[#696969] pl-[2px] pt-[2px] text-[12px] leading-[15px] tracking-[-0.31px]">
            <div className="w-[624px] whitespace-pre">
              {"Origem: UTM Fuso: 22 MC:  51º00'00\" W Hemisferio: Sul\nDatum: SIRGAS 2000"}
            </div>
            <div className="whitespace-pre">
              {"Destino: UTM Fuso: 22 MC:  51º00'00\" W Hemisferio: Sul\nDatum: SIRGAS 2000"}
            </div>
          </div>
          <div className="border-l-[3px] border-r-2 border-t border-[#a0a0a0] border-r-white">
            <DataGrid />
          </div>
          <div className="h-[2px] bg-white" />
        </div>
        <div className="ml-[2px] flex h-[457px] flex-1 flex-col items-center border-b border-r border-[#b5b5b5] bg-white">
          <div className="mt-[4px] w-[21px] border-t-2 border-dotted border-[#c3c3c3]" />
          <div className="mt-[3px] flex flex-col">
            {sideIcons.map((name, i) => (
              <div key={i} className="flex h-6 items-center">
                <Icon name={name} />
              </div>
            ))}
          </div>
          <svg viewBox="0 0 3 5" className="mr-[8px] mt-[4px] h-[5px] w-[3px]">
            <path d="M3 0v5L0 2.500z" fill="#000" />
          </svg>
        </div>
      </div>
      <StatusBar />
      <Taskbar />
      <ProjectWindow />
    </div>
  );
}
